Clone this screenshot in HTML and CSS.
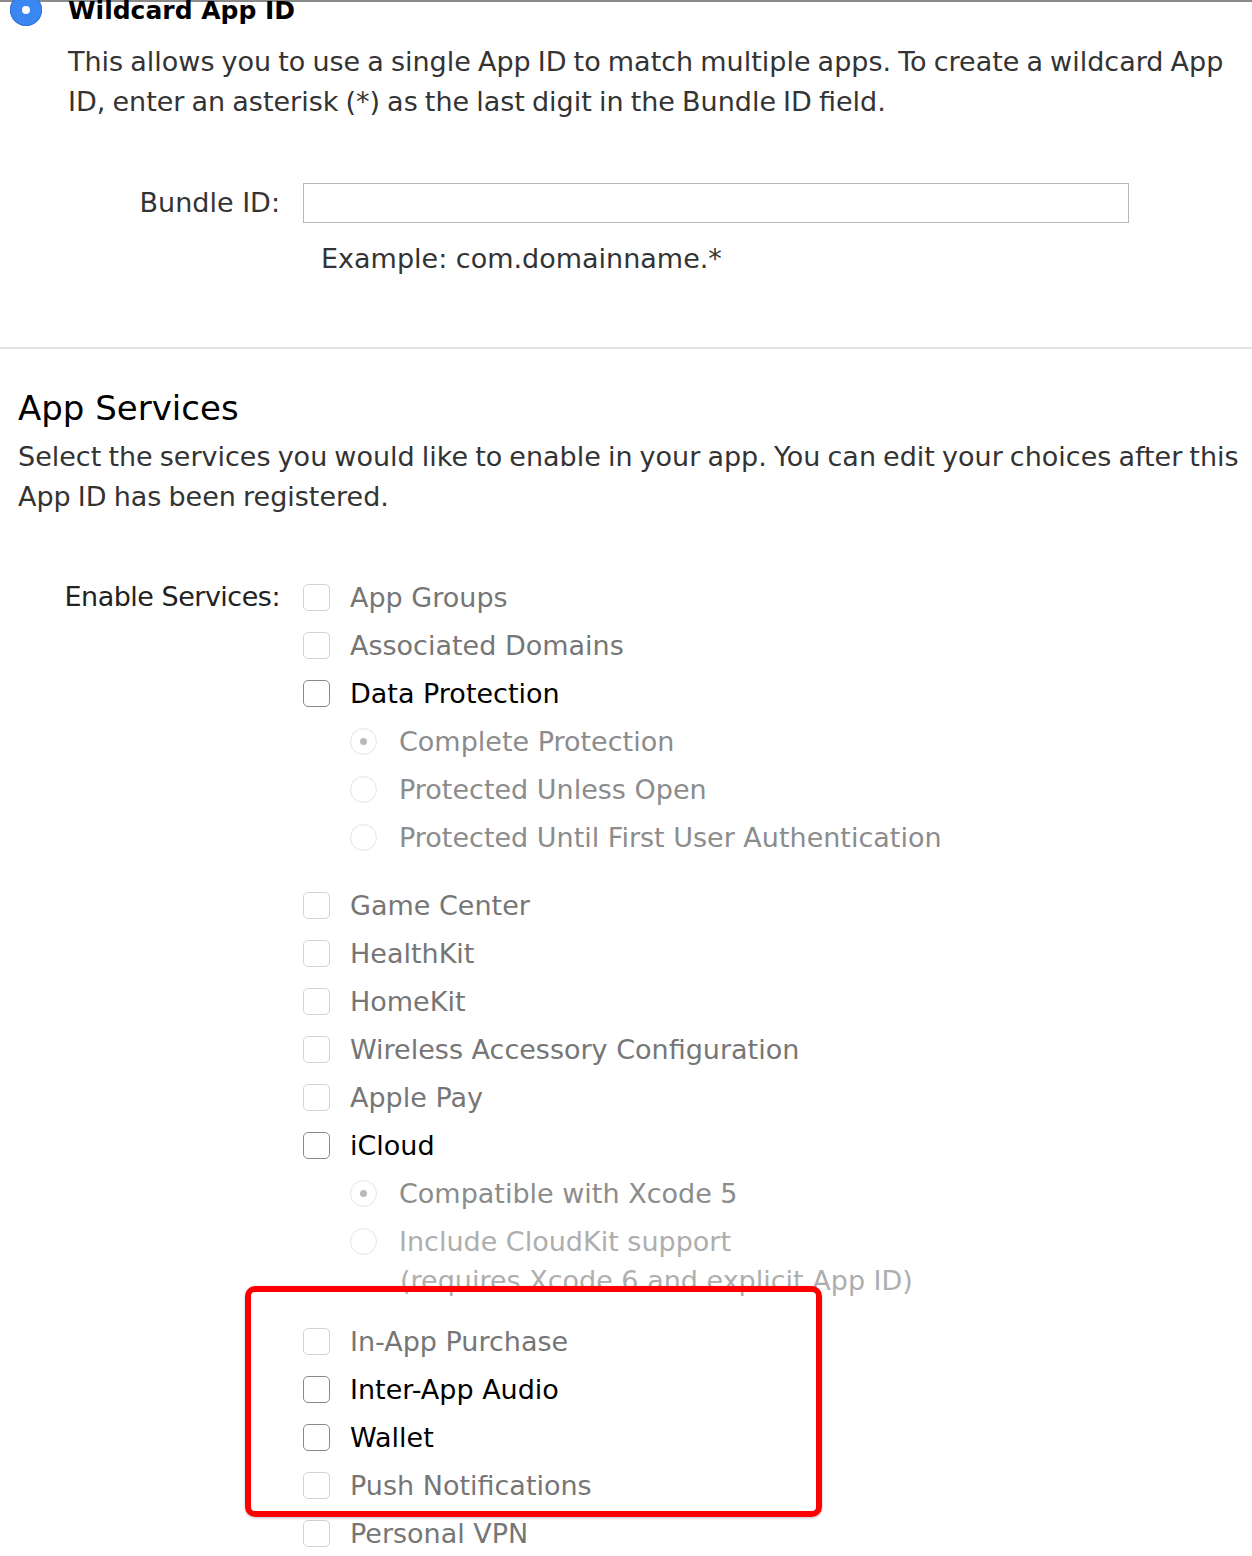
FILE: index.html
```html
<!DOCTYPE html>
<html>
  <head>
    <title>Register App ID</title>
    <link rel="stylesheet" href="styles.css">
  </head>
  <body>
    <div class="topline"></div>

    <section class="wildcard">
      <div class="option-head">
        <span class="radio-on"></span>
        <h2>Wildcard App ID</h2>
      </div>
      <p class="option-desc">This allows you to use a single App ID to match multiple apps. To create a wildcard App ID, enter an asterisk (*) as the last digit in the Bundle ID field.</p>
      <div class="form-row bundle-row">
        <label class="form-label">Bundle ID:</label>
        <input type="text" class="bundle-input">
      </div>
      <p class="example">Example: com.domainname.*</p>
    </section>

    <div class="divider"></div>

    <section class="services">
      <h1>App Services</h1>
      <p class="services-desc">Select the services you would like to enable in your app. You can edit your choices after this App ID has been registered.</p>

      <div class="form-row">
        <label class="form-label enable-label">Enable Services:</label>
        <div class="service-list">
          <div class="item off"><span class="box"></span>App Groups</div>
          <div class="item off"><span class="box"></span>Associated Domains</div>
          <div class="item on"><span class="box"></span>Data Protection</div>
          <div class="sub">
            <div class="item sub-item"><span class="dot checked"></span>Complete Protection</div>
            <div class="item sub-item"><span class="dot"></span>Protected Unless Open</div>
            <div class="item sub-item"><span class="dot"></span>Protected Until First User Authentication</div>
          </div>
          <div class="item off"><span class="box"></span>Game Center</div>
          <div class="item off"><span class="box"></span>HealthKit</div>
          <div class="item off"><span class="box"></span>HomeKit</div>
          <div class="item off"><span class="box"></span>Wireless Accessory Configuration</div>
          <div class="item off"><span class="box"></span>Apple Pay</div>
          <div class="item on"><span class="box"></span>iCloud</div>
          <div class="sub sub-icloud">
            <div class="item sub-item"><span class="dot checked"></span>Compatible with Xcode 5</div>
            <div class="item sub-item faint"><span class="dot"></span>Include CloudKit support</div>
            <div class="note">(requires Xcode 6 and explicit App ID)</div>
          </div>
          <div class="highlight">
            <div class="item off"><span class="box"></span>In-App Purchase</div>
            <div class="item on"><span class="box"></span>Inter-App Audio</div>
            <div class="item on"><span class="box"></span>Wallet</div>
            <div class="item off"><span class="box"></span>Push Notifications</div>
          </div>
          <div class="item off"><span class="box"></span>Personal VPN</div>
        </div>
      </div>
    </section>
  </body>
</html>
```

FILE: styles.css
```css
body {margin: 0; background: #fff; color: #333; font-family: "DejaVu Sans", sans-serif; font-size: 27px; overflow: hidden;}
.topline {height: 2px; background: #8a8a8a;}

/* wildcard option */
.option-head {display: flex; align-items: center; height: 28px; margin-top: -6px;}
.radio-on {width: 32px; height: 32px; border-radius: 50%; background: #3a87f2; box-shadow: 0 0 0 1px #2f73dc inset; margin-left: 10px; position: relative;}
.radio-on::after {content: ""; position: absolute; left: 12px; top: 12px; width: 8px; height: 8px; border-radius: 50%; background: #fff;}
.option-head h2 {margin: 0 0 0 26px; font-size: 25px; color: #000; font-weight: bold;}
.option-desc {margin: 18px 0 0 68px; line-height: 40px; word-spacing: -1.5px;}

.form-row {display: flex; align-items: flex-start;}
.form-label {width: 280px; text-align: right; flex: none; line-height: 40px;}
.bundle-row {margin-top: 61px;}
.bundle-input {margin-left: 23px; width: 826px; height: 40px; box-sizing: border-box; border: 1px solid #b8b8b8; border-radius: 0; padding: 0 8px; font: inherit;}
.example {margin: 16px 0 0 321px; line-height: 40px;}

.divider {height: 2px; background: #e3e3e3; margin-top: 68px;}

/* services */
.services {padding-left: 18px;}
.services h1 {margin: 37px 0 0; font-size: 34px; font-weight: normal; color: #000; line-height: 44px;}
.services-desc {margin: 7px 0 0 0; line-height: 40px; word-spacing: -1.5px;}
.services .form-row {margin-top: 56px; margin-left: -18px;}
.services .form-label {line-height: 48px; color: #222;}
.enable-label {letter-spacing: -0.5px;}

.service-list {margin-left: 23px; flex: 1;}
.item {display: flex; align-items: center; height: 48px; color: #767676; white-space: nowrap;}
.item.on {color: #000;}
.box {width: 25px; height: 25px; border: 1px solid #d2d2d2; border-radius: 5px; margin-right: 20px; flex: none;}
.on .box {border-color: #8a8a8a;}

.sub {padding-left: 47px;}
.sub-item {color: #8c8c8c;}
.sub-item.faint {color: #aeaeae;}
.dot {width: 25px; height: 25px; border: 1px solid #e4e4e4; border-radius: 50%; margin-right: 22px; flex: none; position: relative;}
.dot.checked::after {content: ""; position: absolute; left: 9px; top: 9px; width: 7px; height: 7px; border-radius: 50%; background: #b9b9b9;}
.sub + .item {margin-top: 20px;}
.note {padding-left: 50px; color: #aeaeae; line-height: 32px; height: 32px; white-space: nowrap;}

.highlight {position: relative; margin-top: 20px;}
.highlight::before {content: ""; position: absolute; left: -58px; top: -31px; width: 565px; height: 219px; border: 6px solid #ff0000; border-radius: 10px; box-shadow: 0 1px 3px rgba(0,0,0,0.25);}
```
